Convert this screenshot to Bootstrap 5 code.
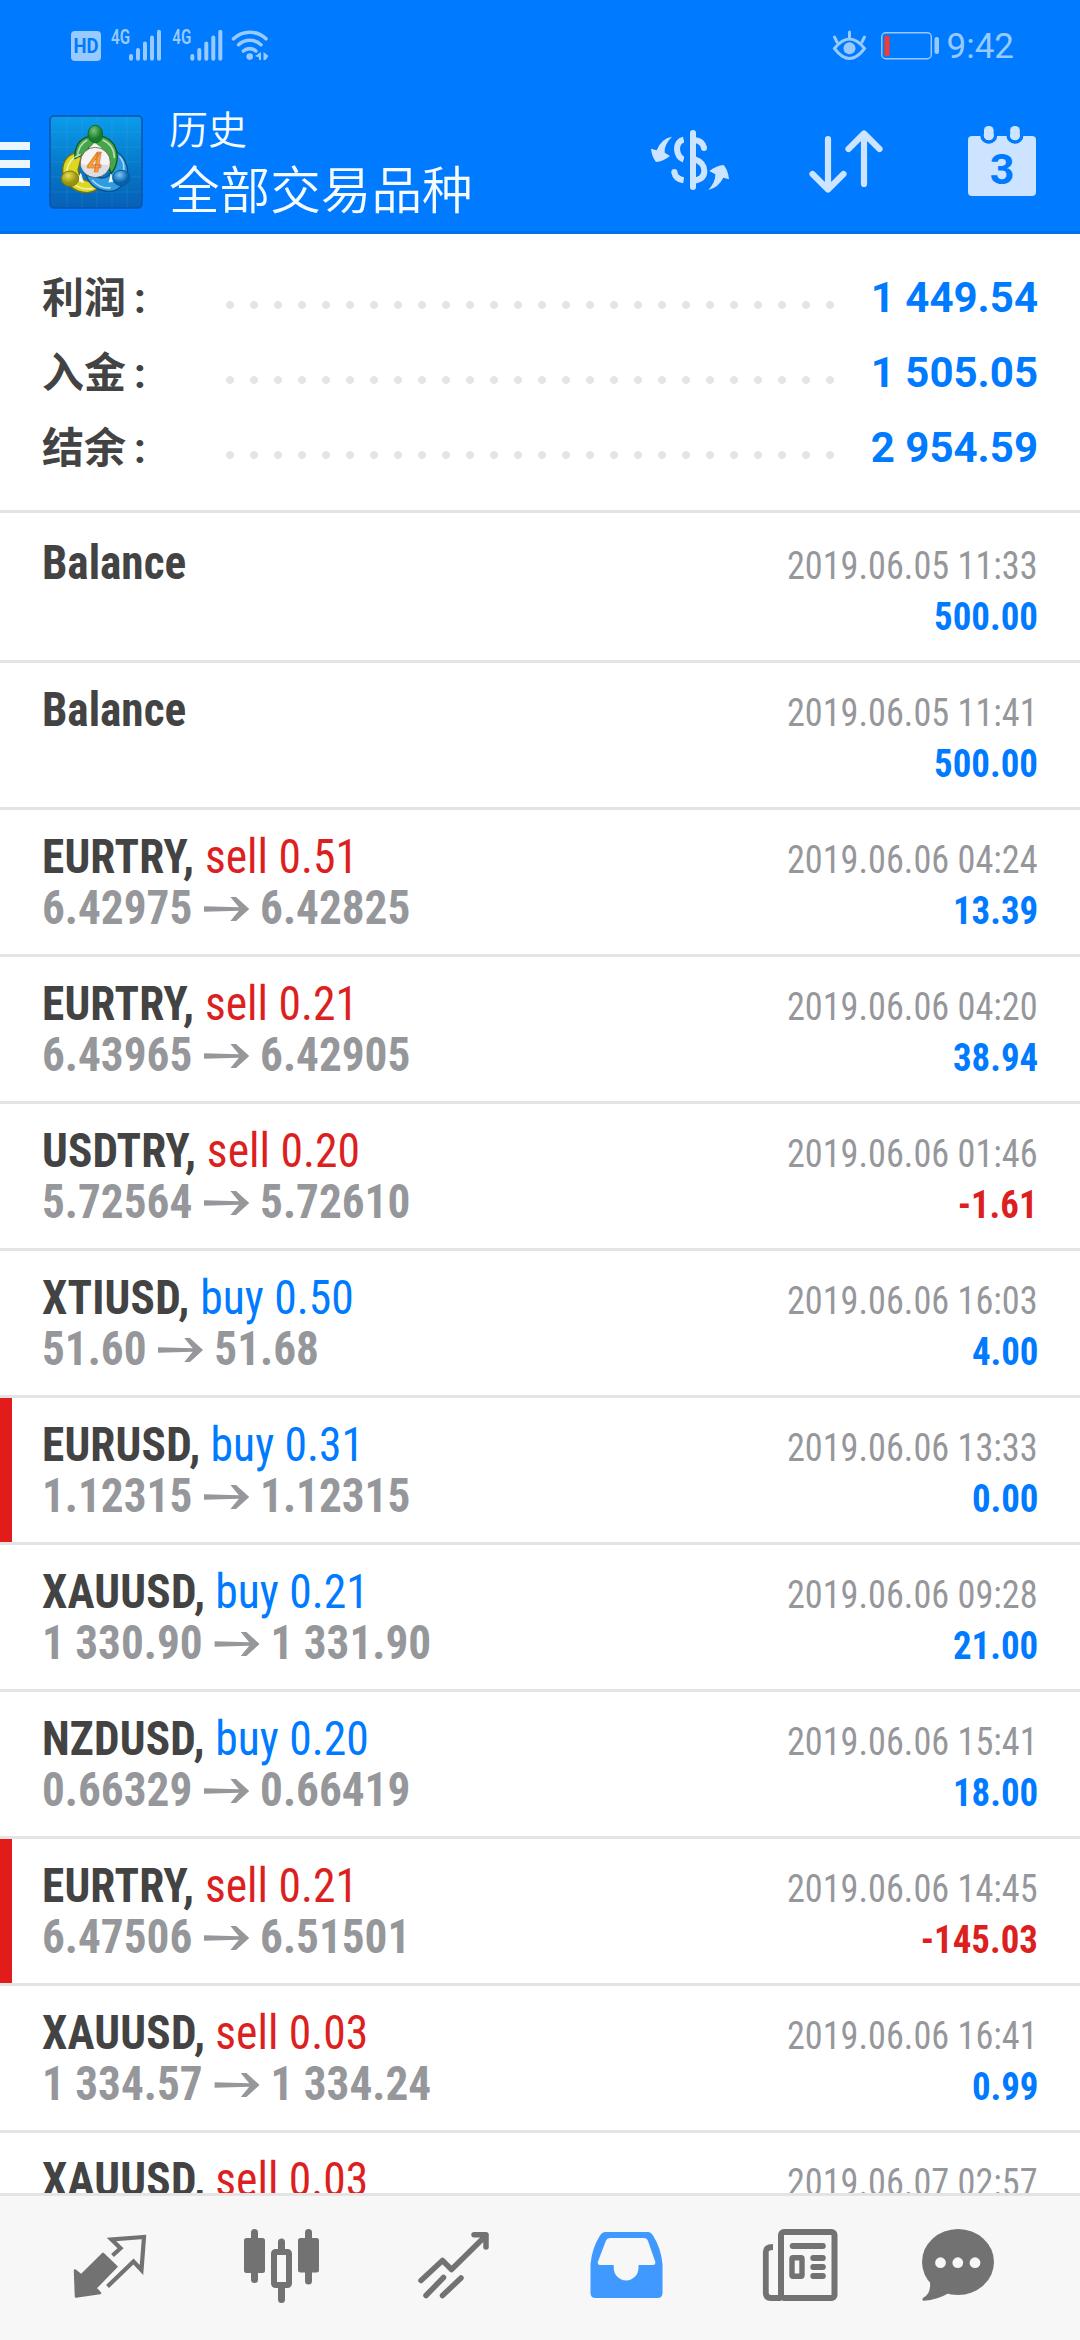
<!doctype html>
<html lang="zh-CN">
<head>
<meta charset="utf-8">
<meta name="viewport" content="width=device-width, initial-scale=1">
<title>历史</title>
<link href="https://cdn.jsdelivr.net/npm/bootstrap@5.3.0/dist/css/bootstrap.min.css" rel="stylesheet">
<style>
body{font-family:Roboto,"Noto Sans CJK SC",sans-serif;width:1080px;height:2340px;overflow:hidden;background:#fff;color:#434343}
svg{display:block;flex:none}
.app-head{background:#007aff;height:234px;border-bottom:3px solid #0070eb}
.status-row{height:90px;color:#99caff}
.clock{font-size:35px;line-height:41px;margin:26px 66px 0 0}
.tool-row{height:141px;color:#cce4ff}
.titles{color:#f5fbff;width:476px;padding-left:9px}
.title-sub{font-size:39px;line-height:50px;margin-top:16px;font-weight:350}
.title-main{font-size:50.6px;line-height:62px;margin-top:5px;font-weight:350;white-space:nowrap}
.totals{height:279px;padding:26px 42px 0;border-bottom:3px solid #e4e4e4}
.total-line{height:75px;line-height:75px;font-size:42px;font-weight:700}
.total-name{width:176px;padding-top:1px}
.total-name i{font-style:normal;margin-left:8px}
.dots{width:624px;height:24px;margin-top:33px;background:radial-gradient(circle,#e5e5e5 3.6px,transparent 4.3px) 0 0/24px 24px}
.deals{overflow:hidden}
.deal{flex:none;height:147px;border:0;border-top:3px solid #e4e4e4;padding:21px 42px 0;background:#fff}
.deal:first-child{border-top-color:#fff}
.deal.flagged{background:linear-gradient(#e21b1b,#e21b1b) 0 0/12px 100% no-repeat}
.deal-line{height:51px;line-height:51px;font-family:"Roboto Condensed",Roboto,sans-serif;white-space:pre}
.lhs{font-size:48px;transform:scaleX(.942);transform-origin:0 50%}
.rhs{font-size:39px;transform:scaleX(.945);transform-origin:100% 50%}
.when{transform:scaleX(.93);color:#96979b}
.sym{letter-spacing:.2px}
.vol{display:inline-block;transform:scaleX(1.008);transform-origin:0 50%}
.price{color:#96979b}
.price svg{display:inline-block;margin:0 12px;vertical-align:3px}
.blue{color:#007aff}.red{color:#dc1f1f}
.tabs{height:147px;background:#f7f7f7;border-top:3px solid #e4e4e4;padding-left:24px;color:#727272}
</style>
</head>
<body class="d-flex flex-column">
<header class="app-head flex-shrink-0">
  <div class="status-row d-flex justify-content-between">
    <svg width="280" height="90" viewBox="0 0 280 90" fill="currentColor">
      <rect x="71" y="31" width="30" height="30" rx="4"/>
      <text x="86" y="53" font-size="19.5" font-weight="700" text-anchor="middle" fill="#007aff" textLength="25" lengthAdjust="spacingAndGlyphs">HD</text>
      <g id="sig"><text x="111" y="43.5" font-size="19.5" font-weight="600" textLength="19" lengthAdjust="spacingAndGlyphs">4G</text>
      <path d="M131 56v2.700M138 50v8.700M145 43.500v15.200M152 37.500v21.200M159 31.700v27" stroke="currentColor" stroke-width="4" stroke-linecap="round"/></g>
      <use href="#sig" x="61.300"/>
      <path d="M233.500 38.800a23.500 23.500 0 0 1 32.500 0M238.600 44.700a16.500 16.500 0 0 1 22.400 0M243.400 51a9.500 9.500 0 0 1 12.500 0" fill="none" stroke="currentColor" stroke-width="3.600" stroke-linecap="round"/>
      <circle cx="249.700" cy="56.600" r="3.300"/><path d="M261 52v8h-2v-2.500l-4-1.500zM263.500 52l5 4-3 4h-2z"/>
    </svg>
    <div class="d-flex">
      <svg width="128" height="90" viewBox="819 0 128 90" fill="currentColor">
        <path d="M834.500 48.500q15-19 30 0q-15 20-30 0zM837 42l-2.500-5M849.500 37v-5M862 42l2.500-5" fill="none" stroke="currentColor" stroke-width="3" stroke-linecap="round"/>
        <circle cx="849.500" cy="48.300" r="6"/>
        <rect x="881.800" y="32.800" width="49.500" height="26" rx="4" fill="none" stroke="currentColor" stroke-width="1.400"/>
        <rect x="884.500" y="35.500" width="5" height="20.500" rx="1.500" fill="#f23b34"/><rect x="934.500" y="37" width="4.500" height="17" rx="2"/>
      </svg>
      <div class="clock">9:42</div>
    </div>
  </div>
  <div class="tool-row d-flex">
    <svg width="160" height="141" viewBox="0 90 160 141">
      <defs>
        <linearGradient id="bg" x1="0" y1="0" x2="0" y2="1"><stop offset="0" stop-color="#0c9cec"/><stop offset=".55" stop-color="#0678c8"/><stop offset="1" stop-color="#0660b6"/></linearGradient>
        <radialGradient id="gr" cx=".4" cy=".3"><stop offset="0" stop-color="#79c47c"/><stop offset="1" stop-color="#177c2c"/></radialGradient>
        <radialGradient id="ye" cx=".4" cy=".3"><stop offset="0" stop-color="#e8e054"/><stop offset="1" stop-color="#98920c"/></radialGradient>
        <radialGradient id="bl" cx=".4" cy=".3"><stop offset="0" stop-color="#7cc8f4"/><stop offset="1" stop-color="#0860ac"/></radialGradient>
      </defs>
      <path d="M0 142h30v8H0zM0 160h30v8H0zM0 178h30v8H0z" fill="#ecf6ff"/>
      <rect x="50" y="116" width="92" height="92" rx="4" fill="url(#bg)" stroke="#0a54a8" stroke-width="1.500"/>
      <path d="M67 117v90M82 117v90M97 117v90M112 117v90M127 117v90M51 132h90M51 147h90M51 162h90M51 177h90M51 192h90" stroke="#5cc4ff" stroke-opacity=".14" fill="none"/>
      <g transform="translate(40 110) scale(.33333)" stroke-linejoin="round">
        <path d="M128 124Q66 130 68 186Q84 246 142 248Q174 244 184 222L146 214Q118 210 114 180Z" fill="#ddd622" stroke="#77710a" stroke-width="4"/>
        <path d="M224 120Q268 150 262 196Q244 248 202 244Q154 240 138 196L186 204Q214 202 214 176Z" fill="#2f9be0" stroke="#07508e" stroke-width="4"/>
        <path d="M104 146Q104 90 146 80L190 80Q230 94 232 142Q230 172 214 190L196 150Q190 114 166 104Q144 108 138 130Z" fill="#45a548" stroke="#0c5b1e" stroke-width="4"/>
        <path d="M112 142Q114 104 142 90M80 184Q86 144 122 134M94 216Q120 242 160 235M156 210Q182 238 212 233M238 138Q254 156 251 180M188 90Q223 104 223 144" fill="none" stroke="#fff" stroke-opacity=".6" stroke-width="5"/>
        <path d="M148 114L164 100L184 114M122 190L130 218L110 210M212 192L222 214L206 216" fill="#eefff0" stroke="#eee" stroke-width="3"/>
        <ellipse cx="166" cy="72" rx="22" ry="26" fill="url(#gr)" stroke="#0f6a24" stroke-width="3"/>
        <ellipse cx="90" cy="206" rx="26" ry="23" fill="url(#ye)" stroke="#7c760a" stroke-width="3"/>
        <ellipse cx="244" cy="204" rx="26" ry="23" fill="url(#bl)" stroke="#0a5a9c" stroke-width="3"/>
        <circle cx="166" cy="157" r="45" fill="#f4f4f4" stroke="#6a5a4a" stroke-width="2.500"/>
        <path d="M122 164a45 45 0 0 0 88 0z" fill="#dedee2"/>
        <text x="164" y="185" font-size="80" font-weight="700" font-style="italic" text-anchor="middle" fill="#ffa02c" stroke="#c8703a" stroke-width="2">4</text>
      </g>
    </svg>
    <div class="titles">
      <div class="title-sub">历史</div>
      <div class="title-main">全部交易品种</div>
    </div>
    <svg width="136" height="141" viewBox="636 90 136 141">
      <g transform="translate(640 110) scale(.33333)" fill="currentColor">
        <path d="M131 89Q111 94 111 118Q113 142 131 149M103 186Q106 207 131 211M163 90Q188 92 192 114M163 147Q193 158 193 183Q193 207 163 212" fill="none" stroke="currentColor" stroke-width="18"/>
        <circle cx="103" cy="186" r="9"/><circle cx="192" cy="114" r="9"/>
        <path d="M96 80Q63 86 50 121L33 116Q36 142 48 156Q70 154 90 138L74 128Q72 104 96 80zM205 240Q236 232 250 203L267 208Q265 182 251 165Q230 166 208 183L226 193Q227 216 205 240z"/>
        <path d="M132 76h18v158h-18z" fill="#007aff"/><path d="M159 69V231" stroke="currentColor" stroke-width="18" stroke-linecap="round"/>
      </g>
    </svg>
    <svg width="154" height="141" viewBox="772 90 154 141" fill="none" stroke="currentColor" stroke-width="6.200" stroke-linecap="round" stroke-linejoin="round">
      <path d="M828 139V189M812.500 174L828 189.500L843.500 174M864 184V133.500M848.500 149L864 133.500L879.500 149"/>
    </svg>
    <svg width="154" height="141" viewBox="926 90 154 141" fill="currentColor">
      <rect x="968" y="136" width="68" height="60" rx="4"/>
      <g stroke="#007aff" stroke-width="3.500"><rect x="982" y="125" width="13.500" height="17" rx="6.500"/><rect x="1008.200" y="125" width="13.500" height="17" rx="6.500"/></g>
      <path d="M980 130h17.500v4.200H980zM1006.500 130h17.500v4.200h-17.500z" fill="#007aff"/>
      <rect x="984" y="126" width="9.600" height="14" rx="4.500"/><rect x="1010.200" y="126" width="9.600" height="14" rx="4.500"/>
      <text x="1002" y="183.500" font-size="43" font-weight="700" text-anchor="middle" fill="#007aff">3</text>
    </svg>
  </div>
</header>

<section class="totals flex-shrink-0">
  <div class="total-line d-flex"><span class="total-name">利润<i>:</i></span><span class="dots"></span><span class="ms-auto blue">1 449.54</span></div>
  <div class="total-line d-flex"><span class="total-name">入金<i>:</i></span><span class="dots"></span><span class="ms-auto blue">1 505.05</span></div>
  <div class="total-line d-flex"><span class="total-name">结余<i>:</i></span><span class="dots"></span><span class="ms-auto blue">2 954.59</span></div>
</section>

<main class="deals d-flex flex-column flex-grow-1" id="deals"></main>

<nav class="tabs d-flex flex-shrink-0">
  <svg width="172" height="144" viewBox="24 2196 172 144" fill="currentColor">
    <path d="M75 2270.500L81.300 2275.500L103 2253.800L116.300 2266.700L95.500 2288L100 2293L76 2296.500Z" stroke="currentColor" stroke-width="2.500" stroke-linejoin="round"/>
    <path d="M112.500 2255.500L120.500 2248.300L111.500 2239.500L144 2237L141.500 2270L133.500 2261.500L107.500 2286.500" fill="none" stroke="currentColor" stroke-width="4.200"/>
  </svg>
  <svg width="172" height="144" viewBox="196 2196 172 144" fill="currentColor">
    <rect x="244" y="2238" width="21" height="35" rx="2.500"/><rect x="251" y="2229" width="7" height="54" rx="3.500"/>
    <rect x="298" y="2238" width="21" height="34.500" rx="2.500"/><rect x="305" y="2229" width="7" height="55.500" rx="3.500"/>
    <rect x="278" y="2238.500" width="7" height="14" rx="3.500"/><rect x="278" y="2285" width="7" height="18" rx="3.500"/>
    <rect x="274" y="2252" width="15" height="33" rx="1.500" fill="#f7f7f7" stroke="currentColor" stroke-width="6"/>
  </svg>
  <svg width="172" height="144" viewBox="368 2196 172 144" fill="none" stroke="currentColor" stroke-width="5.500" stroke-linecap="round" stroke-linejoin="round">
    <path d="M421 2280.500L442.500 2260.500L451.500 2269.500L486 2235.500M474 2234.800H486V2247M443.500 2277.500L426 2295.500M461 2278L442.500 2295.500"/>
  </svg>
  <svg width="172" height="144" viewBox="540 2196 172 144" fill="#4099ff" fill-rule="evenodd">
    <path d="M590.500 2264Q592 2248 600 2235.500Q602 2232 605.500 2232H648Q651 2232 653 2235.500Q661 2248 662.500 2264V2293Q662.500 2298 657.500 2298H595.500Q590.500 2298 590.500 2293ZM610 2238Q607 2238 606 2240.500L598 2261.500Q597 2265 600 2265H613.700V2268A12.400 12.400 0 0 0 638.500 2268V2265H653Q656 2265 655.200 2261.500L648 2241Q647 2238 643.500 2238Z"/>
  </svg>
  <svg width="172" height="144" viewBox="712 2196 172 144" fill="none" stroke="currentColor" stroke-width="6">
    <rect x="781" y="2232" width="53.500" height="66" rx="3"/>
    <path d="M773 2247Q765.800 2247 765.800 2252V2293Q765.800 2298 771 2298H781" stroke-width="5.800"/>
    <path d="M792.700 2246H822.800M813.300 2258H822.800M813.300 2267H822.800M813.300 2276H822.800" stroke-linecap="round"/>
    <rect x="792" y="2257.800" width="10" height="18.500" rx="1" stroke-width="5.400"/>
  </svg>
  <svg width="172" height="144" viewBox="884 2196 172 144" fill="currentColor">
    <ellipse cx="958" cy="2262" rx="36" ry="33"/>
    <path d="M930 2282Q931 2294 923.500 2297.500Q921 2300.500 924 2300.800Q937 2300 949 2293L958 2280Z"/>
    <g fill="#f7f7f7"><circle cx="940.500" cy="2262.700" r="5.400"/><circle cx="957.800" cy="2262.700" r="5.400"/><circle cx="975" cy="2262.700" r="5.400"/></g>
  </svg>
</nav>

<script src="https://cdn.jsdelivr.net/npm/bootstrap@5.3.0/dist/js/bootstrap.bundle.min.js"></script>
<script>
const deals = [
  ['Balance','','','','2019.06.05 11:33','500.00'],
  ['Balance','','','','2019.06.05 11:41','500.00'],
  ['EURTRY','sell 0.51','6.42975','6.42825','2019.06.06 04:24','13.39'],
  ['EURTRY','sell 0.21','6.43965','6.42905','2019.06.06 04:20','38.94'],
  ['USDTRY','sell 0.20','5.72564','5.72610','2019.06.06 01:46','-1.61'],
  ['XTIUSD','buy 0.50','51.60','51.68','2019.06.06 16:03','4.00'],
  ['EURUSD','buy 0.31','1.12315','1.12315','2019.06.06 13:33','0.00',1],
  ['XAUUSD','buy 0.21','1 330.90','1 331.90','2019.06.06 09:28','21.00'],
  ['NZDUSD','buy 0.20','0.66329','0.66419','2019.06.06 15:41','18.00'],
  ['EURTRY','sell 0.21','6.47506','6.51501','2019.06.06 14:45','-145.03',1],
  ['XAUUSD','sell 0.03','1 334.57','1 334.24','2019.06.06 16:41','0.99'],
  ['XAUUSD','sell 0.03','','','2019.06.07 02:57','']
];
const arrow = '<svg width="48" height="24" viewBox="0 0 48 24" fill="currentColor"><path d="M0 9.300L37 10.300L28 0H34L48 12L34 24H28L37 13.700L0 14.700Z"/></svg>';
document.getElementById('deals').innerHTML = deals.map(([sym, vol, from, to, when, sum, flag]) => `
<article class="deal${flag ? ' flagged' : ''}">
  <div class="deal-line d-flex justify-content-between align-items-baseline"><div class="lhs"><b${vol ? ' class="sym"' : ''}>${sym}${vol ? ',' : ''}</b>${vol ? ` <span class="vol ${vol[0] === 's' ? 'red' : 'blue'}">${vol}</span>` : ''}</div><div class="rhs when">${when}</div></div>
  <div class="deal-line d-flex justify-content-between align-items-baseline"><div class="lhs price fw-bold">${from ? from + arrow + to : '&nbsp;'}</div><div class="rhs fw-bold ${sum[0] === '-' ? 'red' : 'blue'}">${sum}</div></div>
</article>`).join('');
</script>
</body>
</html>
